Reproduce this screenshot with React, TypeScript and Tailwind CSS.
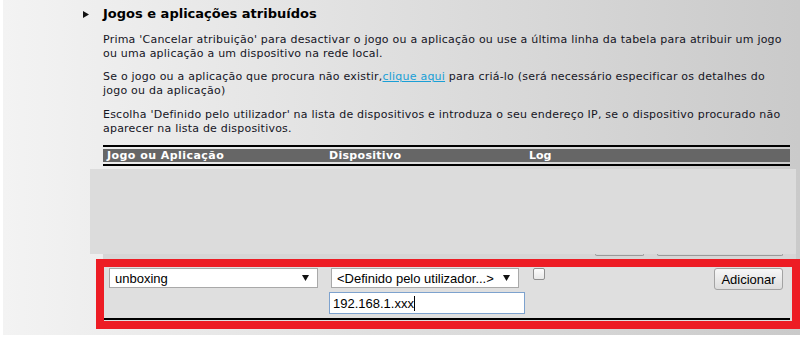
const pageFont = { fontFamily: '"DejaVu Sans", Verdana, sans-serif' }
const formFont = { fontFamily: '"Liberation Sans", Arial, sans-serif' }

function SelectArrow() {
  return (
    <svg width="7" height="6" viewBox="0 0 7 6" aria-hidden>
      <path d="M0 0h7L3.5 6z" fill="#111" />
    </svg>
  )
}

function FakeSelect({ label, className }: { label: string; className: string }) {
  return (
    <div
      className={`flex h-[20px] items-center justify-between border border-[#a9a9a9] bg-white pr-[8px] pl-[5px] text-[13px] text-black ${className}`}
      style={formFont}
    >
      <span className="leading-none">{label}</span>
      <SelectArrow />
    </div>
  )
}

export default function App() {
  return (
    <div className="h-[345px] w-[807px] overflow-hidden bg-white">
      <div
        className="ml-[3px] flex h-[335px] w-[797px] flex-col bg-linear-to-r from-[#f3f3f3] to-[#cacaca] text-[#15151f]"
        style={pageFont}
      >
        <div className="mt-[6px] flex items-center pl-[80px]">
          <svg width="6" height="7" viewBox="0 0 6 7" className="mr-[14px]" aria-hidden>
            <path d="M0 0l6 3.5L0 7z" fill="#111" />
          </svg>
          <h2 className="text-[13px] leading-[16px] font-bold text-black">
            Jogos e aplicações atribuídos
          </h2>
        </div>

        <div className="flex flex-col pr-[10px] pl-[100px] text-[11px] leading-[13.5px] tracking-[0.22px] whitespace-nowrap">
          <p className="mt-[11px]">
            Prima 'Cancelar atribuição' para desactivar o jogo ou a aplicação ou use a última linha da
            tabela para atribuir um jogo
            <br />
            ou uma aplicação a um dispositivo na rede local.
          </p>
          <p className="mt-[10px]">
            Se o jogo ou a aplicação que procura não existir,
            <a href="#" className="text-[#1a9fd6] underline">
              clique aqui
            </a>{" "}
            para criá-lo (será necessário especificar os detalhes do
            <br />
            jogo ou da aplicação)
          </p>
          <p className="mt-[11px]">
            Escolha 'Definido pelo utilizador' na lista de dispositivos e introduza o seu endereço IP, se
            o dispositivo procurado não
            <br />
            aparecer na lista de dispositivos.
          </p>

          <div className="mt-[10px] border-y-2 border-black py-[2px] tracking-normal">
            <div className="flex h-[13px] items-center bg-[#666666] text-[11px] leading-none font-bold text-white">
              <span className="w-[226px] pl-[4px] tracking-[0.45px]">Jogo ou Aplicação</span>
              <span className="w-[200px] tracking-[0.3px]">Dispositivo</span>
              <span>Log</span>
            </div>
          </div>
        </div>

        <div className="mt-[3px] ml-[87px] h-[85px] w-[706px] bg-[#dcdcdc]" />

        <div className="ml-[100px] flex h-[5px] w-[693px] bg-[#d6d6d6]">
          <div className="ml-[492px] h-[2px] w-[49px] rounded-b-[3px] border-x border-b border-[#9a9a9a]" />
          <div className="ml-[13px] h-[2px] w-[126px] rounded-b-[3px] border-x border-b border-[#9a9a9a]" />
        </div>

        <div className="ml-[93px] h-[70px] w-[704px] border-8 border-[#ed1c24] bg-[#dfdfdf]">
          <div className="flex h-full flex-col pr-[2px]">
            <div className="flex flex-1 items-start pt-[1px] pl-[5px]">
              <FakeSelect label="unboxing" className="w-[209px]" />
              <div className="ml-[11px] flex w-[196px] flex-col">
                <FakeSelect label="<Definido pelo utilizador...>" className="ml-[2px] w-[188px]" />
                <div
                  className="mt-[4px] flex h-[22px] items-center border border-[#7da2ce] bg-white pl-[3px] text-[13px] text-black"
                  style={formFont}
                >
                  <span className="leading-none">192.168.1.xxx</span>
                  <span className="h-[15px] w-px bg-black" />
                </div>
              </div>
              <div className="ml-[8px] h-[12px] w-[12px] rounded-[2px] border border-[#8f8f8f] bg-linear-to-b from-[#fcfcfc] to-[#e8e8e8]" />
              <button
                type="button"
                className="mr-[7px] ml-auto h-[22px] w-[69px] rounded-[3px] border border-[#a3a3a3] bg-linear-to-b from-[#f7f7f7] to-[#dddddd] text-[13px] leading-none text-black"
                style={formFont}
              >
                Adicionar
              </button>
            </div>
            <div className="mb-[1px] h-[2px] bg-black" />
          </div>
        </div>
      </div>
    </div>
  )
}
